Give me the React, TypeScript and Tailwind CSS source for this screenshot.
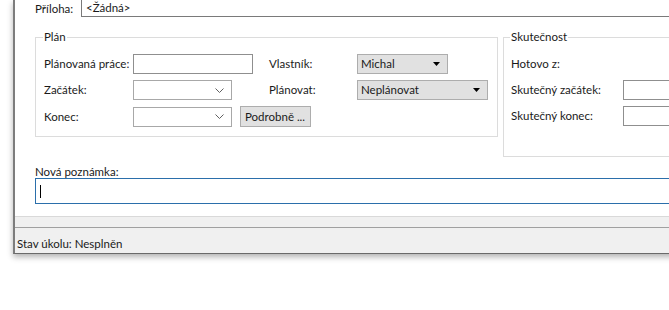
import React from "react";

function Chevron() {
  return (
    <svg width="9" height="5" viewBox="0 0 9 5" className="ml-auto mr-[7px]">
      <polyline points="0.5,0.5 4.5,4.5 8.5,0.5" fill="none" stroke="#606060" strokeWidth="1" />
    </svg>
  );
}

function Triangle() {
  return (
    <svg width="7" height="4" viewBox="0 0 7 4" className="ml-auto mr-[7px]">
      <polygon points="0,0 7,0 3.5,4" fill="#000" />
    </svg>
  );
}

function TextBox({ className }: { className: string }) {
  return <div className={`border border-[#8f8f8f] bg-white ${className}`} />;
}

function DateCombo() {
  return (
    <div className="flex h-[20px] w-[99px] items-center border border-[#a8a8a8] bg-white">
      <Chevron />
    </div>
  );
}

function Select({ value, width }: { value: string; width: string }) {
  return (
    <div className={`flex h-[20px] items-center border border-[#adadad] bg-[#e1e1e1] pl-[3px] ${width}`}>
      <span>{value}</span>
      <Triangle />
    </div>
  );
}

export default function App() {
  return (
    <div className="h-[310px] w-[669px] overflow-hidden whitespace-nowrap bg-white font-['Lato',sans-serif] text-[11.5px] leading-[16px] text-[#1a1a1a]">
      <div className="ml-[13px] w-[700px] border-b border-l-2 border-[#7d7d7d] border-b-[#6a6a6a] bg-[#f0f0f0] shadow-[0_3px_6px_rgba(0,0,0,0.3)]">
        <div className="h-[217px] border-b border-[#d9d9d9] bg-white pl-[20px]">
          <div className="flex h-[17px] items-center">
            <span className="w-[46px]">Příloha:</span>
            <div className="flex h-[17px] flex-1 items-center border-b border-l border-[#7a7a7a] pl-[4px]">
              &lt;Žádná&gt;
            </div>
          </div>

          <div className="mt-[12px] flex items-start gap-[5px]">
            <fieldset className="w-[463px] border border-[#dcdcdc] pb-[9px] pl-[8px]">
              <legend className="ml-[-1px] px-[1px]">Plán</legend>
              <div className="mt-[9px] grid grid-cols-[89px_136px_88px_auto] gap-y-[6px]">
                <span className="self-center">Plánovaná práce:</span>
                <TextBox className="h-[20px] w-[120px]" />
                <span className="self-center">Vlastník:</span>
                <Select value="Michal" width="w-[91px]" />

                <span className="self-center">Začátek:</span>
                <DateCombo />
                <span className="self-center">Plánovat:</span>
                <Select value="Neplánovat" width="w-[131px]" />

                <span className="self-center">Konec:</span>
                <div className="col-span-3 flex items-center gap-[8px]">
                  <DateCombo />
                  <button className="h-[21px] w-[71px] border border-[#adadad] bg-[#e1e1e1] px-[4px] text-left">
                    Podrobně ...
                  </button>
                </div>
              </div>
            </fieldset>

            <fieldset className="w-[200px] border border-[#dcdcdc] pb-[30px] pl-[7px]">
              <legend className="ml-[-1px] px-[1px]">Skutečnost</legend>
              <div className="mt-[9px] grid grid-cols-[112px_auto] gap-y-[6px]">
                <span className="flex h-[20px] items-center">Hotovo z:</span>
                <span />
                <span className="self-center">Skutečný začátek:</span>
                <TextBox className="h-[20px] w-[80px]" />
                <span className="self-center">Skutečný konec:</span>
                <TextBox className="h-[20px] w-[80px]" />
              </div>
            </fieldset>
          </div>

          <div className="mt-[8px] h-[13px] leading-[13px]">Nová poznámka:</div>
          <div className="flex h-[26px] items-center border border-[#2b6fab] pl-[4px]">
            <div className="h-[13px] w-px bg-black" />
          </div>
        </div>

        <div className="h-[10px]" />
        <div className="h-[26px] border-t border-[#a0a0a0] pl-[2px] pt-[8px]">Stav úkolu: Nesplněn</div>
      </div>
    </div>
  );
}
